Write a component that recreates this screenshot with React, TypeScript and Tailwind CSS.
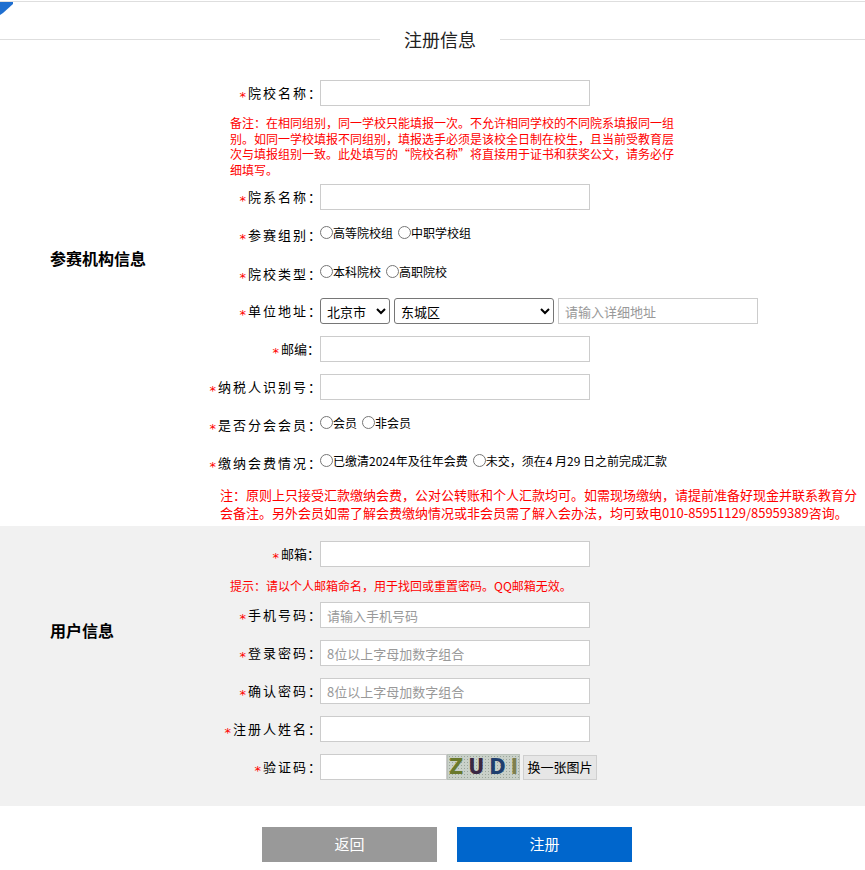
import React from 'react';

const font = { fontFamily: '"Noto Sans CJK SC", "Noto Sans", sans-serif' };

function Label({ text, spaced = true }: { text: string; spaced?: boolean }) {
  return (
    <div className="w-[123px] mr-[-3px] shrink-0 text-right text-[13px] leading-[26px] text-black">
      <span className="inline-block text-[#f00] mr-[2px] translate-y-[3px]" style={{ fontFamily: '"DejaVu Sans", sans-serif' }}>*</span>
      <span className={spaced ? 'tracking-[2px]' : 'pr-[3px]'}>{text}：</span>
    </div>
  );
}

function TextInput({ placeholder = '', width = 'w-[270px]' }: { placeholder?: string; width?: string }) {
  return (
    <input
      type="text"
      placeholder={placeholder}
      className={`${width} h-[26px] border border-[#ccc] bg-white px-[6px] text-[13px] text-black placeholder:text-[#999] outline-none`}
    />
  );
}

function Radio({ name, label }: { name: string; label: string }) {
  return (
    <label className="flex items-center mr-[5px]">
      <input type="radio" name={name} className="m-0 w-[13px] h-[13px]" />
      <span className="text-[12px] text-black">{label}</span>
    </label>
  );
}

const Row = ({ children, className = '' }: { children: React.ReactNode; className?: string }) => (
  <div className={`flex items-center h-[26px] ${className}`}>{children}</div>
);

export default function App() {
  return (
    <div className="relative w-[865px] min-h-[870px] bg-white" style={font}>
      {/* corner mark */}
      <svg className="absolute left-0 top-0" width="14" height="15" viewBox="0 0 14 15">
        <polygon points="0,1 13,1 13,3 3,12 0,14" fill="#1f6fd0" />
      </svg>
      <div className="h-[1px] mt-[1px] bg-[#dedede]" />

      <div className="flex items-center h-[39px] mt-[18px]">
        <div className="w-[380px] h-[1px] bg-[#dedede]" />
        <div className="w-[120px] text-center text-[18px] text-[#222]">注册信息</div>
        <div className="flex-1 h-[1px] bg-[#dedede]" />
      </div>

      {/* section 1 */}
      <div className="flex pb-[5px]">
        <div className="w-[200px] shrink-0 pl-[50px] pt-[187px]">
          <div className="text-[16px] leading-[24px] font-bold text-black">参赛机构信息</div>
        </div>
        <div className="flex-1 pt-[21px]">
          <Row>
            <Label text="院校名称" />
            <TextInput />
          </Row>
          <div className="ml-[30px] mt-[9px] text-[12px] leading-[15.5px] text-[#f00] whitespace-nowrap">
            备注：在相同组别，同一学校只能填报一次。不允许相同学校的不同院系填报同一组<br />
            别。如同一学校填报不同组别，填报选手必须是该校全日制在校生，且当前受教育层<br />
            次与填报组别一致。此处填写的“院校名称”将直接用于证书和获奖公文，请务必仔<br />
            细填写。
          </div>
          <Row className="mt-[7px]">
            <Label text="院系名称" />
            <TextInput />
          </Row>
          <Row className="mt-[12px]">
            <Label text="参赛组别" />
            <div className="flex items-center mb-[5px]">
              <Radio name="group" label="高等院校组" />
              <Radio name="group" label="中职学校组" />
            </div>
          </Row>
          <Row className="mt-[13px]">
            <Label text="院校类型" />
            <div className="flex items-center mb-[5px]">
              <Radio name="type" label="本科院校" />
              <Radio name="type" label="高职院校" />
            </div>
          </Row>
          <Row className="mt-[11px]">
            <Label text="单位地址" />
            <select className="w-[70px] h-[26px] border border-[#767676] rounded-[3px] bg-white text-[13px] text-black pl-[2px]">
              <option>北京市</option>
            </select>
            <select className="ml-[4px] w-[160px] h-[26px] border border-[#767676] rounded-[3px] bg-white text-[13px] text-black pl-[2px]">
              <option>东城区</option>
            </select>
            <div className="ml-[4px]">
              <TextInput placeholder="请输入详细地址" width="w-[200px]" />
            </div>
          </Row>
          <Row className="mt-[12px]">
            <Label text="邮编" spaced={false} />
            <TextInput />
          </Row>
          <Row className="mt-[12px]">
            <Label text="纳税人识别号" />
            <TextInput />
          </Row>
          <Row className="mt-[12px]">
            <Label text="是否分会会员" />
            <div className="flex items-center mb-[5px]">
              <Radio name="member" label="会员" />
              <Radio name="member" label="非会员" />
            </div>
          </Row>
          <Row className="mt-[12px]">
            <Label text="缴纳会费情况" />
            <div className="flex items-center mb-[5px]">
              <Radio name="fee" label="已缴清2024年及往年会费" />
              <Radio name="fee" label="未交，须在4 月29 日之前完成汇款" />
            </div>
          </Row>
          <div className="ml-[20px] mt-[10px] text-[13px] leading-[17.5px] text-[#f00] whitespace-nowrap">
            注：原则上只接受汇款缴纳会费，公对公转账和个人汇款均可。如需现场缴纳，请提前准备好现金并联系教育分<br />
            会备注。另外会员如需了解会费缴纳情况或非会员需了解入会办法，均可致电010-85951129/85959389咨询。
          </div>
        </div>
      </div>

      {/* section 2 */}
      <div className="flex bg-[#f1f1f1] pb-[26px]">
        <div className="w-[200px] shrink-0 pl-[50px] pt-[92px]">
          <div className="text-[16px] leading-[24px] font-bold text-black">用户信息</div>
        </div>
        <div className="flex-1 pt-[15px]">
          <Row>
            <Label text="邮箱" spaced={false} />
            <TextInput />
          </Row>
          <div className="ml-[30px] mt-[11px] text-[12px] leading-[16px] text-[#f00] whitespace-nowrap">
            提示：请以个人邮箱命名，用于找回或重置密码。QQ邮箱无效。
          </div>
          <Row className="mt-[8px]">
            <Label text="手机号码" />
            <TextInput placeholder="请输入手机号码" />
          </Row>
          <Row className="mt-[12px]">
            <Label text="登录密码" />
            <TextInput placeholder="8位以上字母加数字组合" />
          </Row>
          <Row className="mt-[12px]">
            <Label text="确认密码" />
            <TextInput placeholder="8位以上字母加数字组合" />
          </Row>
          <Row className="mt-[12px]">
            <Label text="注册人姓名" />
            <TextInput />
          </Row>
          <Row className="mt-[12px]">
            <Label text="验证码" />
            <TextInput width="w-[127px]" />
            <div className="w-[73px] h-[26px] flex items-center justify-center bg-[#c9d1c9] bg-[radial-gradient(#9aa59a_0.6px,transparent_0.8px)] bg-[length:3px_3px] border border-[#b9c1b9]">
              <span className="text-[22px] leading-[22px] font-bold tracking-[5px] ml-[5px]" style={{ fontFamily: '"DejaVu Sans Condensed", "DejaVu Sans", sans-serif' }}>
                <span className="text-[#6a7a2c]">Z</span>
                <span className="text-[#3a2843]">U</span>
                <span className="text-[#1f3f6e]">D</span>
                <span className="text-[#7f7f4e]">I</span>
              </span>
            </div>
            <button className="ml-[3px] w-[74px] h-[25px] border border-[#cfcfcf] bg-[#e6e6e6] text-[13px] text-black">
              换一张图片
            </button>
          </Row>
        </div>
      </div>

      <div className="flex gap-[20px] pl-[262px] mt-[21px]">
        <button className="w-[175px] h-[35px] bg-[#999999] text-white text-[15px]">返回</button>
        <button className="w-[175px] h-[35px] bg-[#0066cc] text-white text-[15px]">注册</button>
      </div>
    </div>
  );
}
